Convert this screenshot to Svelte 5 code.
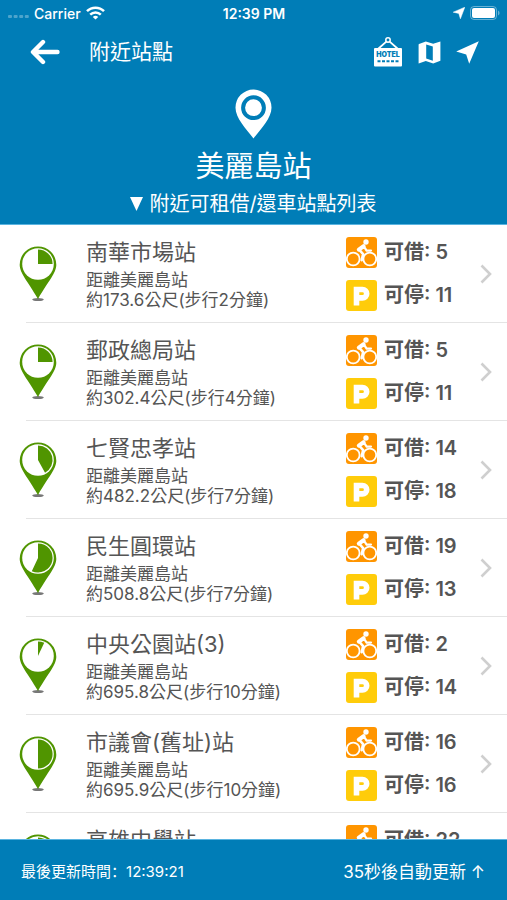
<script lang="ts">
  interface Station {
    name: string;
    distance: string;
    minutes: number;
    bikes: number;
    docks: number;
    fill: number;
  }

  const origin = "美麗島站";
  const updatedAt = "12:39:21";
  const countdown = 35;

  const stations: Station[] = [
    { name: "南華市場站", distance: "173.6", minutes: 2, bikes: 5, docks: 11, fill: 0.25 },
    { name: "郵政總局站", distance: "302.4", minutes: 4, bikes: 5, docks: 11, fill: 0.25 },
    { name: "七賢忠孝站", distance: "482.2", minutes: 7, bikes: 14, docks: 18, fill: 0.42 },
    { name: "民生圓環站", distance: "508.8", minutes: 7, bikes: 19, docks: 13, fill: 0.57 },
    { name: "中央公園站(3)", distance: "695.8", minutes: 10, bikes: 2, docks: 14, fill: 0.07 },
    { name: "市議會(舊址)站", distance: "695.9", minutes: 10, bikes: 16, docks: 16, fill: 0.5 },
    { name: "高雄中學站", distance: "702.5", minutes: 10, bikes: 22, docks: 10, fill: 0.6 },
  ];

  // pie slice inside the pin, clockwise from the top
  function slice(fill: number) {
    const r = 14.6;
    const a = fill * Math.PI * 2;
    const x = 19 + r * Math.sin(a);
    const y = 18 - r * Math.cos(a);
    return `M19 18V${18 - r}A${r} ${r} 0 ${fill > 0.5 ? 1 : 0} 1 ${x} ${y}Z`;
  }
</script>

<div class="app">
  <header>
    <div class="status">
      <div class="carrier">
        <svg width="21" height="12" viewBox="0 0 21 12" fill="#fff" opacity="0.3">
          <rect x="0" y="8" width="4" height="3" rx="1" />
          <rect x="5.6" y="8" width="4" height="3" rx="1" />
          <rect x="11.2" y="8" width="4" height="3" rx="1" />
          <rect x="16.8" y="8" width="4" height="3" rx="1" />
        </svg>
        <span>Carrier</span>
        <svg width="19" height="14" viewBox="0 0 19 14" fill="none" stroke="#fff" stroke-width="2.5">
          <path d="M1 5.2a12 12 0 0 1 17 0" />
          <path d="M4.2 8.6a7.5 7.5 0 0 1 10.6 0" />
          <path d="M9.5 13.6L6.8 11a3.8 3.8 0 0 1 5.4 0z" fill="#fff" stroke="none" />
        </svg>
      </div>
      <span class="time">12:39 PM</span>
      <div class="power">
        <svg width="12" height="12" viewBox="0 0 12 12" fill="#fff">
          <path d="M11.8.2L7.4 11.8 5.8 6.4.2 5.2z" stroke="#fff" stroke-width=".5" />
        </svg>
        <svg width="30" height="14" viewBox="0 0 30 14">
          <rect x="0.5" y="0.5" width="26" height="13" rx="3.5" fill="none" stroke="#fff" opacity="0.4" />
          <rect x="2" y="2" width="23" height="10" rx="2" fill="#fff" />
          <path d="M28 4.5q1.6.8 1.6 2.5T28 9.5z" fill="#fff" opacity="0.4" />
        </svg>
      </div>
    </div>

    <nav>
      <button class="icon" aria-label="返回">
        <svg width="30" height="26" viewBox="0 0 30 26" fill="none" stroke="#fff" stroke-width="4.4" stroke-linecap="round" stroke-linejoin="round">
          <path d="M13 3L3 13l10 10M4 13h23.5" />
        </svg>
      </button>
      <h1>附近站點</h1>
      <button class="icon" aria-label="飯店">
        <svg width="30" height="30" viewBox="0 0 30 30">
          <path d="M5 12L13.6 4.4M25 12L16.4 4.4" stroke="#fff" stroke-width="1.8" />
          <circle cx="15" cy="3" r="2.2" fill="none" stroke="#fff" stroke-width="1.5" />
          <rect x="1" y="11" width="28" height="18.5" rx="1" fill="#fff" />
          <text x="15" y="20" text-anchor="middle" class="hotel">HOTEL</text>
          <path d="M4.5 24.2h21" stroke="#007db7" stroke-width="2" stroke-dasharray="3 1.5" />
        </svg>
      </button>
      <button class="icon" aria-label="地圖">
        <svg width="23" height="23" viewBox="0 0 23 23">
          <path d="M1 3L7.8.6l7.4 2.2L22.4.4V19.8l-7.2 2.7-7.4-2.4L.6 22.5V3.4z" fill="#fff" />
          <path d="M8.2 3.4l6.6 2.1v14.2l-6.6-2.2z" fill="#007db7" />
        </svg>
      </button>
      <button class="icon" aria-label="定位">
        <svg width="23" height="23" viewBox="0 0 23 23" fill="#fff">
          <path d="M22.8.2L13.2 22.8 10.2 13.4.2 10.6z" />
        </svg>
      </button>
    </nav>

    <div class="hero">
      <svg width="37" height="50" viewBox="0 0 37 50">
        <path d="M18.5.5a18 18 0 0 0-18 18.2C.5 29 11 39.5 18.5 49.5 26 39.5 36.5 29 36.5 18.7A18 18 0 0 0 18.5.5z" fill="#fff" />
        <circle cx="18.5" cy="18.7" r="10.4" fill="none" stroke="#007db7" stroke-width="4" />
      </svg>
      <h2>{origin}</h2>
      <p>
        <svg width="13" height="14" viewBox="0 0 13 14" fill="#fff"><path d="M0 0h13L6.5 14z" /></svg>
        附近可租借/還車站點列表
      </p>
    </div>
  </header>

  <ul>
    {#each stations as station (station.name)}
      <li>
        <a href="#station">
          <svg class="pin" width="38" height="56" viewBox="0 0 38 56">
            <ellipse cx="19" cy="53.6" rx="5.8" ry="1.5" fill="#777" />
            <path d="M19 .4A18.3 18.3 0 0 0 .7 18.7C.7 27 8 34 19 53 30 34 37.3 27 37.3 18.7A18.3 18.3 0 0 0 19 .4z" fill="#509500" />
            <circle cx="19" cy="18" r="15.8" fill="#fff" />
            <path d={slice(station.fill)} fill="#509500" />
          </svg>
          <div class="info">
            <h3>{station.name}</h3>
            <p>距離{origin}</p>
            <p>約{station.distance}公尺(步行{station.minutes}分鐘)</p>
          </div>
          <div class="counts">
            <div class="count">
              <svg width="31" height="31" viewBox="0 0 31 31">
                <rect width="31" height="31" rx="3" fill="#ff9500" />
                <g fill="none" stroke="#fff" stroke-linecap="round" stroke-linejoin="round">
                  <circle cx="7.2" cy="22" r="6.4" stroke-width="1.8" />
                  <circle cx="23.8" cy="22" r="6.4" stroke-width="1.8" />
                  <path d="M13.5 13L18 9.6l2.6 4h4.4" stroke-width="2.2" />
                  <path d="M13.5 13l3.6 4.2-1.4 6" stroke-width="2.6" />
                  <path d="M12.8 12.6L17.6 9.2" stroke-width="4" />
                </g>
                <circle cx="20" cy="5" r="2.7" fill="#fff" />
              </svg>
              <span>可借: {station.bikes}</span>
            </div>
            <div class="count">
              <svg width="31" height="31" viewBox="0 0 31 31">
                <rect width="31" height="31" rx="3" fill="#ffcc0a" />
                <path d="M10.5 25.5V9.5h6a4 4 0 0 1 0 8.4h-6" fill="none" stroke="#fff" stroke-width="5.6" />
              </svg>
              <span>可停: {station.docks}</span>
            </div>
          </div>
          <svg width="12" height="20" viewBox="0 0 12 20" fill="none" stroke="#cfcfcf" stroke-width="2.6">
            <path d="M1.5 1.5L10 10l-8.5 8.5" />
          </svg>
        </a>
      </li>
    {/each}
  </ul>

  <footer>
    <span>最後更新時間<span class="colon">：</span>{updatedAt}</span>
    <button class="refresh">{countdown}秒後自動更新 ↑</button>
  </footer>
</div>

<style>
  :global(body) {
    margin: 0;
  }

  .app {
    height: 100vh;
    display: flex;
    flex-direction: column;
    overflow: hidden;
    background: #fff;
    color: #555;
    font-family: Inter, "Noto Sans CJK TC", sans-serif;
  }

  svg {
    display: block;
    flex: none;
  }

  h1,
  h2,
  h3,
  p,
  ul {
    margin: 0;
    padding: 0;
    font-weight: 400;
  }

  button {
    border: 0;
    padding: 0;
    background: none;
    color: inherit;
    font: inherit;
  }

  header {
    flex: none;
    background: #007db7;
    color: #fff;
    border-bottom: 1px solid #5ab4e0;
  }

  .status {
    display: grid;
    grid-template-columns: 1fr auto 1fr;
    align-items: center;
    height: 26px;
    padding: 0 7px 0 8px;
    font-size: 14px;
    font-weight: 500;
  }

  .time {
    font-weight: 600;
  }

  .carrier,
  .power {
    display: flex;
    align-items: center;
    gap: 5px;
  }

  .power {
    justify-content: flex-end;
  }

  nav {
    display: flex;
    align-items: center;
    height: 52px;
    padding: 0 28px 0 30px;
  }

  h1 {
    flex: 1;
    margin-left: 29px;
    font-size: 21px;
    line-height: 30px;
  }

  .icon + .icon {
    margin-left: 15px;
  }

  .icon:nth-of-type(2) {
    margin-left: 0;
  }

  .hotel {
    font: 900 7px Inter, sans-serif;
    fill: #007db7;
  }

  .hero {
    display: flex;
    flex-direction: column;
    align-items: center;
    padding: 11px 0 5px;
  }

  h2 {
    margin-top: 8px;
    font-size: 29px;
    line-height: 40px;
  }

  .hero p {
    display: flex;
    align-items: center;
    gap: 6px;
    margin-top: 2px;
    font-size: 20px;
    line-height: 30px;
  }

  ul {
    flex: 1;
    min-height: 0;
    overflow: hidden;
    list-style: none;
  }

  li {
    background: linear-gradient(#e4e4e4, #e4e4e4) 26px 100% / 100% 1px no-repeat;
  }

  a {
    display: flex;
    align-items: center;
    height: 98px;
    padding: 0 15px 0 19px;
    color: inherit;
    text-decoration: none;
  }

  .info {
    flex: 1;
    margin-left: 29px;
    padding-bottom: 2px;
    font-size: 17px;
    line-height: 20px;
    white-space: nowrap;
  }

  h3 {
    margin-bottom: 3px;
    font-size: 22px;
    line-height: 30px;
  }

  .counts {
    display: flex;
    flex-direction: column;
    gap: 12px;
    width: 134px;
  }

  .count {
    display: flex;
    align-items: center;
    gap: 7px;
    font-size: 20px;
    font-weight: 600;
    line-height: 31px;
  }

  footer {
    flex: none;
    display: flex;
    align-items: center;
    justify-content: space-between;
    height: 60px;
    padding: 0 22px 0 21px;
    background: #007db7;
    border-top: 1px solid #5ab4e0;
    color: #fff;
    font-size: 15px;
  }

  .colon {
    font-family: "Noto Sans CJK SC", sans-serif;
  }

  .refresh {
    font-size: 17px;
  }
</style>
